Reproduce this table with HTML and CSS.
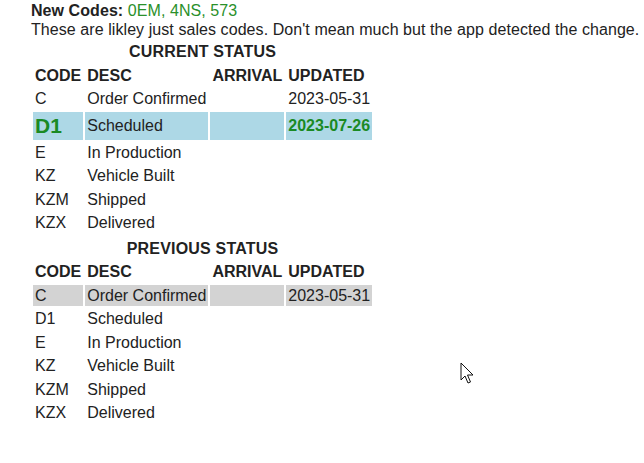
FILE: index.html
```html
<!DOCTYPE html>
<html lang="en">
<head>
    <meta charset="UTF-8">
    <title>Order Status</title>
    <link rel="stylesheet" href="styles.css">
</head>
<body>
    <div class="page">
        <p class="codes"><b>New Codes:</b> <span class="new">0EM, 4NS, 573</span></p>
        <p class="note">These are likley just sales codes. Don't mean much but the app detected the change.</p>

        <table class="status">
            <tr><th colspan="4" class="title">CURRENT STATUS</th></tr>
            <tr><th>CODE</th><th>DESC</th><th>ARRIVAL</th><th>UPDATED</th></tr>
            <tr><td>C</td><td>Order Confirmed</td><td></td><td>2023-05-31</td></tr>
            <tr class="current"><td class="big">D1</td><td>Scheduled</td><td></td><td class="date">2023-07-26</td></tr>
            <tr><td>E</td><td>In Production</td><td></td><td></td></tr>
            <tr><td>KZ</td><td>Vehicle Built</td><td></td><td></td></tr>
            <tr><td>KZM</td><td>Shipped</td><td></td><td></td></tr>
            <tr><td>KZX</td><td>Delivered</td><td></td><td></td></tr>
        </table>

        <table class="status">
            <tr><th colspan="4" class="title">PREVIOUS STATUS</th></tr>
            <tr><th>CODE</th><th>DESC</th><th>ARRIVAL</th><th>UPDATED</th></tr>
            <tr class="prev"><td>C</td><td>Order Confirmed</td><td></td><td>2023-05-31</td></tr>
            <tr><td>D1</td><td>Scheduled</td><td></td><td></td></tr>
            <tr><td>E</td><td>In Production</td><td></td><td></td></tr>
            <tr><td>KZ</td><td>Vehicle Built</td><td></td><td></td></tr>
            <tr><td>KZM</td><td>Shipped</td><td></td><td></td></tr>
            <tr><td>KZX</td><td>Delivered</td><td></td><td></td></tr>
        </table>
    </div>

    <svg class="cursor" width="14" height="24" viewBox="0 0 14 24">
        <path d="M1 1 L1 18 L5 14 L8 21 L10.5 20 L7.5 13 L13 13 Z" fill="#fff" stroke="#111" stroke-width="1" stroke-linejoin="miter"/>
    </svg>
</body>
</html>
```

FILE: styles.css
```css
body {
    margin: 0;
    background: #fff;
    font-family: "Liberation Sans", Arial, sans-serif;
    font-size: 16px;
    color: #222;
}

.page {
    padding: 1px 0 0 31px;
}

p {
    margin: 0;
    line-height: 19px;
    letter-spacing: 0.07px;
}

.new {
    color: #2a902a;
}

.status {
    border-spacing: 2px;
}

.status th,
.status td {
    padding: 1px 2px;
    line-height: 19.5px;
    text-align: left;
    white-space: nowrap;
}

.status th.title {
    text-align: center;
    letter-spacing: 0.2px;
}

.current td {
    background: #add8e6;
    line-height: 26px;
}

.current .big {
    font-size: 21px;
    font-weight: bold;
    color: #1a8a24;
}

.current .date {
    font-weight: bold;
    color: #1a8a24;
}

.prev td {
    background: #d3d3d3;
}

.cursor {
    position: absolute;
    left: 460px;
    top: 362px;
}
```
